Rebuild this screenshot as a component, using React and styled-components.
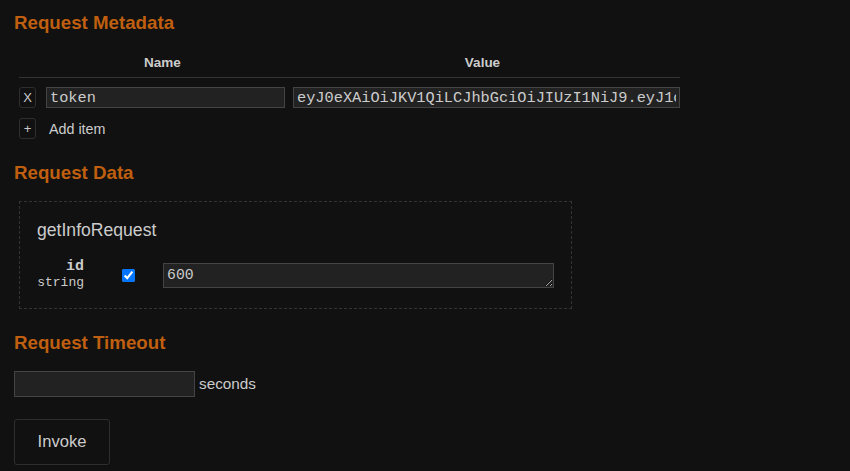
import styled, { createGlobalStyle } from "styled-components";

const GlobalStyle = createGlobalStyle`
  html, body {
    margin: 0;
    padding: 0;
    background: #111111;
  }
  body {
    font-family: "Liberation Sans", Arial, sans-serif;
    color: #cccccc;
  }
`;

const Page = styled.div`
  padding: 0 14px;
  min-height: 471px;
  box-sizing: border-box;
`;

const Heading = styled.h3`
  margin: ${(p) => (p.$first ? "12px" : "23px")} 0 0 0;
  font-size: 18.72px;
  line-height: 22px;
  font-weight: bold;
  color: #bf5f0f;
`;

const MetaTable = styled.div`
  margin: 21px 0 0 5px;
  width: 661px;
`;

const MetaRow = styled.div`
  display: grid;
  grid-template-columns: 21px 245px 395px;
  align-items: center;
`;

const HeaderRow = styled(MetaRow)`
  border-bottom: 1px solid #333;
  padding-bottom: 6px;
`;

const HeaderCell = styled.div`
  text-align: center;
  font-weight: bold;
  font-size: 13.5px;
  line-height: 16px;
  color: #cccccc;
`;

const DataRow = styled(MetaRow)`
  margin-top: 9px;
`;

const SmallBtn = styled.button`
  width: 17px;
  height: 21px;
  padding: 0;
  background: #111;
  border: 1px solid #2e2e2e;
  border-radius: 3px;
  color: #cccccc;
  font-family: "Liberation Sans", Arial, sans-serif;
  font-size: 13px;
  line-height: 19px;
  cursor: pointer;
`;

const TextInput = styled.input`
  box-sizing: border-box;
  height: 21px;
  width: ${(p) => p.$width}px;
  margin-left: ${(p) => p.$offset || 0}px;
  padding: 0 3px;
  background: #222;
  border: 1px solid #444;
  color: #cccccc;
  font-family: "Liberation Mono", "Courier New", monospace;
  font-size: 15.3px;
  outline: none;
`;

const AddRow = styled.div`
  display: flex;
  align-items: center;
  gap: 13px;
  margin-top: 10px;
  font-size: 14.3px;
`;

const DataBox = styled.div`
  margin: 17px 0 0 5px;
  width: 553px;
  box-sizing: border-box;
  border: 1px dashed #333;
  padding: 18px 17px 17px 17px;
`;

const MessageName = styled.div`
  font-size: 17.6px;
  line-height: 20px;
  color: #cccccc;
`;

const FieldRow = styled.div`
  display: flex;
  align-items: center;
  margin-top: 19px;
`;

const FieldLabel = styled.div`
  width: 47px;
  text-align: right;
  font-family: "Liberation Mono", "Courier New", monospace;
  line-height: 16px;
`;

const FieldName = styled.div`
  font-weight: bold;
  font-size: 15px;
`;

const FieldType = styled.div`
  font-size: 13px;
`;

const Check = styled.input`
  margin: 0 0 0 38px;
  width: 13px;
  height: 13px;
`;

const ValueArea = styled.textarea`
  box-sizing: border-box;
  margin-left: 28px;
  width: 391px;
  height: 25px;
  padding: 2px 3px;
  background: #222;
  border: 1px solid #444;
  color: #cccccc;
  color-scheme: dark;
  font-family: "Liberation Mono", "Courier New", monospace;
  font-size: 14.8px;
  line-height: 18px;
  outline: none;
  overflow: hidden;
`;

const TimeoutRow = styled.div`
  display: flex;
  align-items: center;
  gap: 4px;
  margin-top: 17px;
  font-size: 15.3px;
  line-height: 18px;
`;

const TimeoutInput = styled.input`
  box-sizing: border-box;
  width: 181px;
  height: 26px;
  background: #222;
  border: 1px solid #444;
  color: #ccc;
  outline: none;
`;

const InvokeBtn = styled.button`
  display: block;
  margin-top: 22px;
  width: 96px;
  height: 46px;
  background: #111;
  border: 1px solid #2e2e2e;
  border-radius: 3px;
  color: #cccccc;
  font-family: "Liberation Sans", Arial, sans-serif;
  font-size: 16.6px;
  cursor: pointer;
`;

const TOKEN =
  "eyJ0eXAiOiJKV1QiLCJhbGciOiJIUzI1NiJ9.eyJ1c2VyIjoiYWRtaW4iLCJleHAiOjE1MTYyMzkwMjJ9";

export default function App() {
  return (
    <>
      <GlobalStyle />
      <Page>
        <Heading $first>Request Metadata</Heading>
        <MetaTable>
          <HeaderRow>
            <div />
            <HeaderCell>Name</HeaderCell>
            <HeaderCell>Value</HeaderCell>
          </HeaderRow>
          <DataRow>
            <SmallBtn>X</SmallBtn>
            <TextInput $width={239} $offset={6} defaultValue="token" />
            <TextInput $width={387} $offset={8} defaultValue={TOKEN} />
          </DataRow>
          <AddRow>
            <SmallBtn>+</SmallBtn>
            <span>Add item</span>
          </AddRow>
        </MetaTable>

        <Heading>Request Data</Heading>
        <DataBox>
          <MessageName>getInfoRequest</MessageName>
          <FieldRow>
            <FieldLabel>
              <FieldName>id</FieldName>
              <FieldType>string</FieldType>
            </FieldLabel>
            <Check type="checkbox" defaultChecked />
            <ValueArea defaultValue="600" />
          </FieldRow>
        </DataBox>

        <Heading>Request Timeout</Heading>
        <TimeoutRow>
          <TimeoutInput />
          <span>seconds</span>
        </TimeoutRow>
        <InvokeBtn>Invoke</InvokeBtn>
      </Page>
    </>
  );
}
